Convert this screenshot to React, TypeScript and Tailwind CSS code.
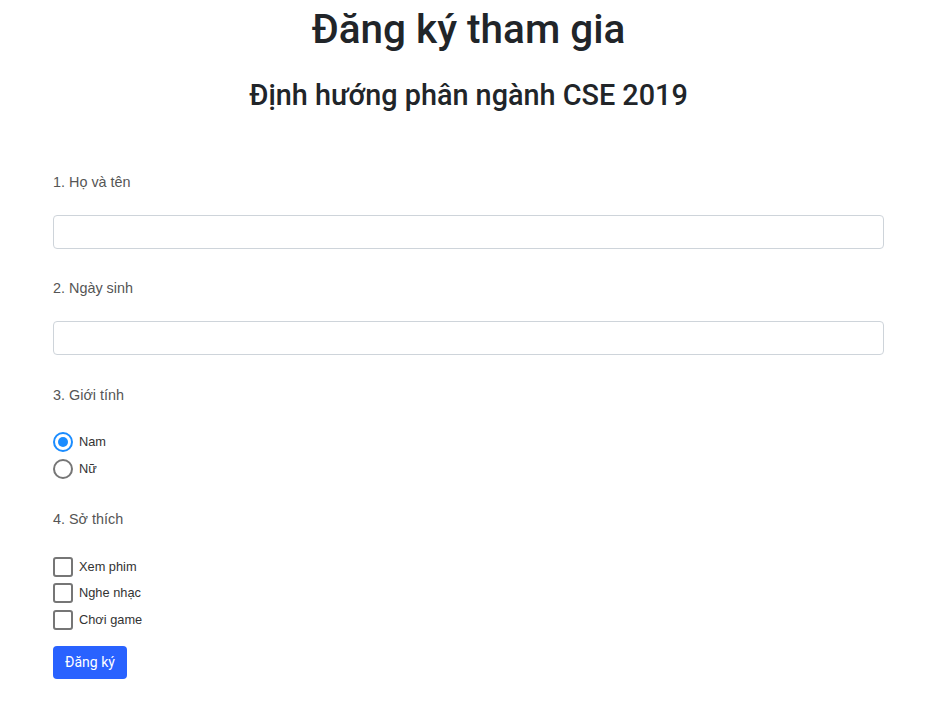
import React, { useState } from "react";

const sans = "font-['Liberation_Sans',Arial,sans-serif]";
const roboto = "font-['Roboto','Liberation_Sans',sans-serif]";

const Label = ({ text, className }: { text: string; className?: string }) => (
  <div className={`${sans} text-[14.4px] leading-[20px] text-[#555] ${className ?? ""}`}>{text}</div>
);

const Radio = ({ checked, label, onClick }: { checked: boolean; label: string; onClick: () => void }) => (
  <div onClick={onClick} className="flex items-center gap-[6px] h-[20px] cursor-pointer">
    {checked ? (
      <span className="w-[20px] h-[20px] rounded-full border-2 border-[#1a8cff] flex items-center justify-center">
        <span className="w-[10px] h-[10px] rounded-full bg-[#1a8cff]" />
      </span>
    ) : (
      <span className="w-[20px] h-[20px] rounded-full border-2 border-[#767676]" />
    )}
    <span className={`${sans} text-[12.8px] text-[#333]`}>{label}</span>
  </div>
);

const Check = ({ checked, label, onClick }: { checked: boolean; label: string; onClick: () => void }) => (
  <div onClick={onClick} className="flex items-center gap-[6px] h-[20px] cursor-pointer">
    <span
      className={`w-[20px] h-[20px] rounded-[3px] border-2 flex items-center justify-center ${
        checked ? "border-[#1a8cff] bg-[#1a8cff]" : "border-[#767676]"
      }`}
    >
      {checked && (
        <svg viewBox="0 0 16 16" className="w-[14px] h-[14px]">
          <path d="M3 8.5l3 3 7-7" stroke="#fff" strokeWidth="2.2" fill="none" />
        </svg>
      )}
    </span>
    <span className={`${sans} text-[12.8px] text-[#333]`}>{label}</span>
  </div>
);

export default function App() {
  const [gender, setGender] = useState("nam");
  const [hobbies, setHobbies] = useState<string[]>([]);
  const toggle = (h: string) =>
    setHobbies((prev) => (prev.includes(h) ? prev.filter((x) => x !== h) : [...prev, h]));

  return (
    <div className="bg-white min-h-[708px] pl-[53px] pr-[55px]">
      <h1 className={`${roboto} text-[40.5px] leading-[48px] font-medium text-[#212529] text-center pt-[5px]`}>
        Đăng ký tham gia
      </h1>
      <h3 className={`${roboto} text-[28.8px] leading-[34px] font-medium text-[#212529] text-center mt-[25px]`}>
        Định hướng phân ngành CSE 2019
      </h3>

      <form className="flex flex-col" onSubmit={(e) => e.preventDefault()}>
        <Label text="1. Họ và tên" className="mt-[60px]" />
        <input className="mt-[23px] h-[34px] w-full border border-[#ced4da] rounded-[4px] px-3 outline-none" />

        <Label text="2. Ngày sinh" className="mt-[29px]" />
        <input className="mt-[23px] h-[34px] w-full border border-[#ced4da] rounded-[4px] px-3 outline-none" />

        <Label text="3. Giới tính" className="mt-[30px]" />
        <div className="mt-[27px] flex flex-col gap-[7px]">
          <Radio checked={gender === "nam"} label="Nam" onClick={() => setGender("nam")} />
          <Radio checked={gender === "nu"} label="Nữ" onClick={() => setGender("nu")} />
        </div>

        <Label text="4. Sở thích" className="mt-[30px]" />
        <div className="mt-[28px] flex flex-col">
          <Check checked={hobbies.includes("phim")} label="Xem phim" onClick={() => toggle("phim")} />
          <div className="mt-[6px]">
            <Check checked={hobbies.includes("nhac")} label="Nghe nhạc" onClick={() => toggle("nhac")} />
          </div>
          <div className="mt-[7px]">
            <Check checked={hobbies.includes("game")} label="Chơi game" onClick={() => toggle("game")} />
          </div>
        </div>

        <div className="mt-[16px]">
          <button
            type="submit"
            className={`${roboto} h-[33px] w-[74px] rounded-[4px] bg-[#2962ff] text-white text-[14px]`}
          >
            Đăng ký
          </button>
        </div>
      </form>
    </div>
  );
}
